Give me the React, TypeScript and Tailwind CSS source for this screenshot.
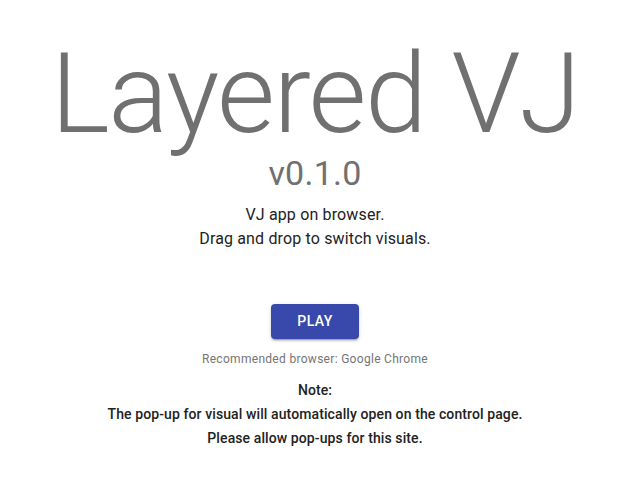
export default function App() {
  return (
    <div className="flex min-h-[497px] flex-col items-center bg-white pl-[7px] font-['Roboto',sans-serif] text-center">
      <h1 className="mt-[35px] text-[112px] font-light leading-[118px] tracking-[-1.5px] text-[#707070]">Layered VJ</h1>
      <h2 className="text-[34px] leading-[40px] tracking-[0.25px] text-[#707070]">v0.1.0</h2>
      <div className="mt-[10px] text-[16px] leading-[24px] tracking-[0.15px] text-[#222]">
        <p>VJ app on browser.</p>
        <p>Drag and drop to switch visuals.</p>
      </div>
      <button className="mt-[53px] h-[35px] w-[88px] rounded-[4px] bg-[#3949ab] text-[14px] font-medium tracking-[0.4px] text-white shadow-[0_3px_1px_-2px_rgba(0,0,0,0.2),0_2px_2px_0_rgba(0,0,0,0.14),0_1px_5px_0_rgba(0,0,0,0.12)]">
        PLAY
      </button>
      <p className="mt-[12px] text-[12px] leading-[16px] tracking-[0.3px] text-[#757575]">Recommended browser: Google Chrome</p>
      <div className="mt-[11px] text-[14px] font-medium leading-[24px] tracking-[0.1px] text-[#222]">
        <p>Note:</p>
        <p>The pop-up for visual will automatically open on the control page.</p>
        <p>Please allow pop-ups for this site.</p>
      </div>
    </div>
  );
}
